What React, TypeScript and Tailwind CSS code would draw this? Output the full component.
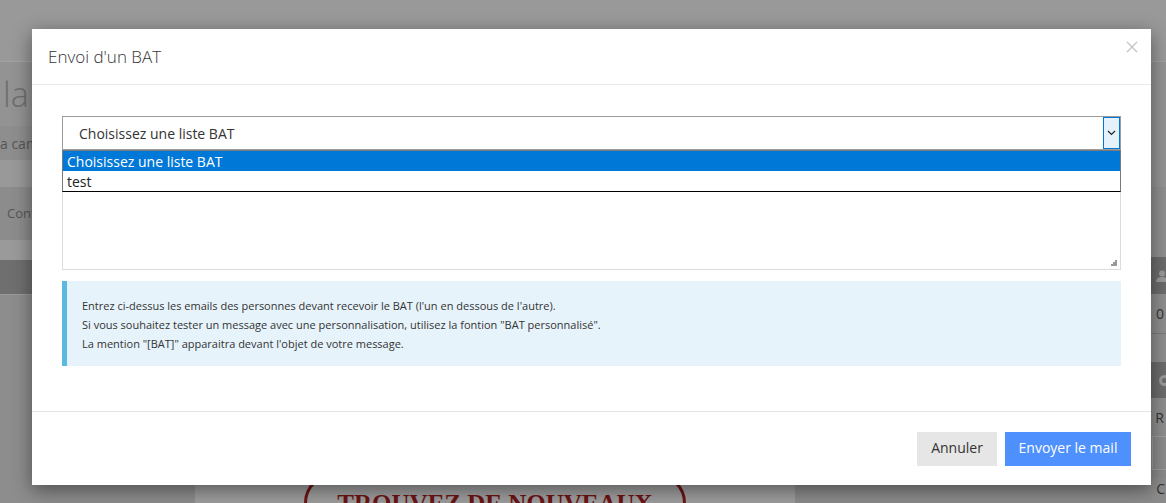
import React from 'react';

const font = { fontFamily: '"Open Sans", "Noto Sans", sans-serif' };

function Background() {
  return (
    <div className="flex h-full w-full">
      {/* colonne gauche */}
      <div className="flex w-[195px] flex-col bg-[#939393]">
        <div className="h-[62px] border-b border-[#a3a3a3] bg-[#999999]" />
        <div className="flex h-[64px] items-center text-[34px] font-light leading-none text-[#6e6e6e]">
          <span className="pl-[3px]">la</span>
        </div>
        <div className="flex h-[34px] items-center bg-[#8e8e8e] text-[14px] text-[#555]">a campagne</div>
        <div className="h-[27px] bg-[#999]" />
        <div className="flex h-[53px] items-center bg-[#8c8c8c] pl-[7px] text-[13px] text-[#555]">Configuration</div>
        <div className="h-[20px] bg-[#9a9a9a]" />
        <div className="h-[35px] border-b border-[#9a9a9a] bg-[#6f6f6f]" />
        <div className="flex-1 bg-[#8d8d8d]" />
      </div>
      {/* colonne centrale */}
      <div className="flex w-[600px] flex-col bg-[#999]">
        <div className="flex-1" />
        <div className="flex h-[30px] justify-center bg-[#9e9e9e]">
          <div
            className="flex h-[60px] items-start rounded-full border-[3px] border-[#6d1414] px-[30px] pt-[15px] text-[25px] font-bold leading-none text-[#6d1414]"
            style={{ fontFamily: '"Liberation Serif", serif' }}
          >
            TROUVEZ DE NOUVEAUX
          </div>
        </div>
      </div>
      {/* colonne droite */}
      <div className="flex flex-1 flex-col bg-[#8a8a8a]">
        <div className="h-[62px] border-b border-[#a3a3a3] bg-[#999]" />
        <div className="h-[125px] bg-[#949494]" />
        <div className="h-[70px] bg-[#8f8f8f]" />
        <div className="flex h-[37px] items-center justify-end bg-[#6c6c6c]">
          <svg width="10" height="12" viewBox="0 0 10 12">
            <circle cx="6" cy="3.5" r="3" fill="#9a9a9a" />
            <path d="M0 12C0 8 3 7 6 7S12 8 12 12Z" fill="#9a9a9a" />
          </svg>
        </div>
        <div className="flex h-[40px] items-center justify-end border-b border-[#7a7a7a] bg-[#8e8e8e] pr-[2px] text-[14px] text-[#333]">0</div>
        <div className="h-[28px] bg-[#8e8e8e]" />
        <div className="flex h-[36px] items-center justify-end bg-[#6c6c6c]">
          <div className="h-[11px] w-[11px] translate-x-[4px] rounded-full border-[3px] border-[#9a9a9a]" />
        </div>
        <div className="flex h-[38px] items-center justify-end bg-[#8e8e8e] pr-[2px] text-[14px] text-[#333]">R</div>
        <div className="mb-[8px] ml-auto h-[34px] w-[14px] border border-r-0 border-[#9e9e9e] bg-[#8c8c8c]" />
        <div className="flex flex-1 items-start justify-end bg-[#8c8c8c] pr-[1px] text-[14px] text-[#333]">C</div>
      </div>
    </div>
  );
}

export default function App() {
  return (
    <div className="relative h-[503px] w-[1166px] overflow-hidden bg-[#999]" style={font}>
      <Background />

      {/* Modale */}
      <div className="absolute left-[32px] top-[29px] w-[1119px] bg-white shadow-[0_5px_18px_rgba(0,0,0,0.45)]">
        <div className="flex h-[56px] items-center justify-between border-b border-[#e9e9e9] pl-[16px] pr-[13px]">
          <h4 className="text-[17px] font-light text-[#333]">Envoi d'un BAT</h4>
          <svg width="12" height="12" viewBox="0 0 12 12" className="mb-[19px]">
            <path d="M1 1L11 11M11 1L1 11" stroke="#c4c4c4" strokeWidth="1.3" />
          </svg>
        </div>

        <div className="px-[30px] pb-[45px] pt-[31px]">
          <div className="relative">
            <div className="flex h-[34px] items-center border border-[#9c9c9c] pl-[16px] text-[14px] text-[#333]">
              <span className="flex-1">Choisissez une liste BAT</span>
              <div className="flex h-[32px] w-[17px] items-center justify-center border border-[#0078d7] bg-[#e5f1fb]">
                <svg width="9" height="6" viewBox="0 0 9 6">
                  <path d="M1 1L4.5 4.5L8 1" stroke="#222" strokeWidth="1.2" fill="none" />
                </svg>
              </div>
            </div>

            {/* liste déroulante */}
            <div className="absolute left-0 right-0 top-[34px] z-10 border border-[#7a7a7a] border-b-black bg-white text-[14px]">
              <div className="flex h-[20px] items-center bg-[#0078d7] pl-[4px] text-white">Choisissez une liste BAT</div>
              <div className="flex h-[20px] items-center pl-[4px] text-[#222]">test</div>
            </div>

            <div className="relative mt-[10px] h-[110px] border border-[#dcdcdc]">
              <svg width="8" height="8" viewBox="0 0 8 8" className="absolute bottom-[2px] right-[2px]">
                <rect x="5" y="1" width="2" height="2" fill="#999" />
                <rect x="3" y="3" width="2" height="2" fill="#999" />
                <rect x="5" y="3" width="2" height="2" fill="#999" />
                <rect x="1" y="5" width="2" height="2" fill="#999" />
                <rect x="3" y="5" width="2" height="2" fill="#999" />
                <rect x="5" y="5" width="2" height="2" fill="#999" />
              </svg>
            </div>
          </div>

          <div className="mt-[11px] h-[85px] border-l-[5px] border-[#5bb8e0] bg-[#e7f3fb] pl-[15px] pt-[15px] text-[11px] leading-[19px] text-[#333]">
            <p>Entrez ci-dessus les emails des personnes devant recevoir le BAT (l'un en dessous de l'autre).</p>
            <p>Si vous souhaitez tester un message avec une personnalisation, utilisez la fontion "BAT personnalisé".</p>
            <p>La mention "[BAT]" apparaitra devant l'objet de votre message.</p>
          </div>
        </div>

        <div className="flex h-[74px] justify-end gap-[8px] border-t border-[#e5e5e5] pr-[20px] pt-[20px]">
          <button className="h-[34px] w-[80px] bg-[#e6e6e6] pb-[3px] text-[14px] text-[#333]">Annuler</button>
          <button className="h-[34px] w-[126px] bg-[#4d90fe] pb-[3px] text-[14px] text-white">Envoyer le mail</button>
        </div>
      </div>
    </div>
  );
}
